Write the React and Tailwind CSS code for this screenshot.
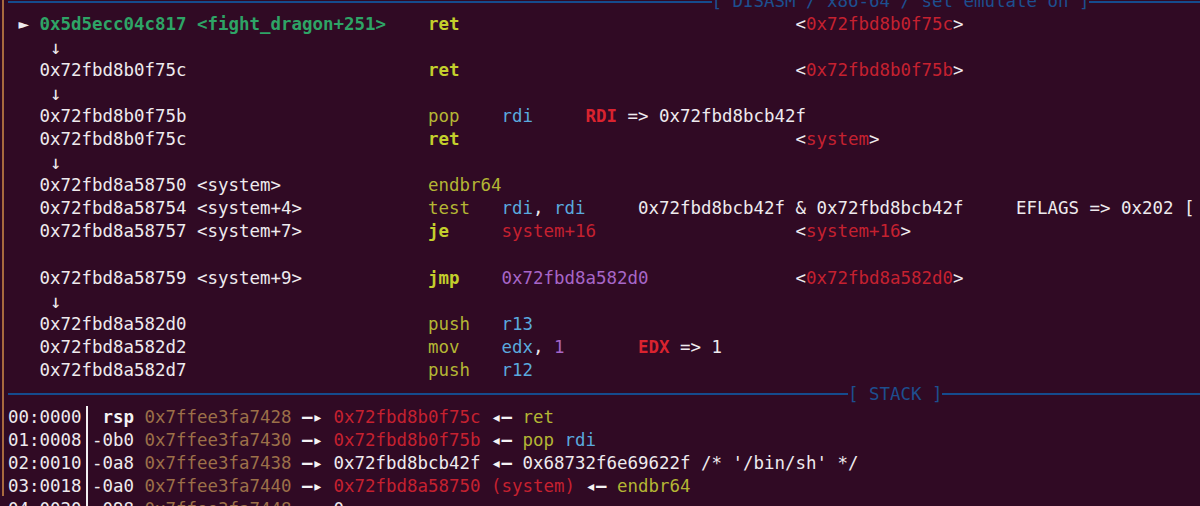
import React from 'react';

// pwndbg context: disasm + stack panes in an Ubuntu terminal
const W = 'text-[#eeeaee]';
const WB = 'text-[#f4f2f4] font-bold';
const G = 'text-[#2ea466] font-bold';
const Y = 'text-[#b4b634]';
const YB = 'text-[#c3cf2c] font-bold';
const R = 'text-[#c52130]';
const RB = 'text-[#d9232f] font-bold';
const B = 'text-[#5aa9de]';
const P = 'text-[#a766c8]';
const BR = 'text-[#9c7049]';
const DOWN = 'text-[#eeeaee] text-[19px]';

const disasm = [
  [[1, '►', W], [3, '0x5d5ecc04c817 <fight_dragon+251>', G], [40, 'ret', YB], [75, '<', W], [76, '0x72fbd8b0f75c', R], [90, '>', W]],
  [[4, '↓', DOWN]],
  [[3, '0x72fbd8b0f75c', W], [40, 'ret', YB], [75, '<', W], [76, '0x72fbd8b0f75b', R], [90, '>', W]],
  [[4, '↓', DOWN]],
  [[3, '0x72fbd8b0f75b', W], [40, 'pop', Y], [47, 'rdi', B], [55, 'RDI', RB], [59, '=> 0x72fbd8bcb42f', W]],
  [[3, '0x72fbd8b0f75c', W], [40, 'ret', YB], [75, '<', W], [76, 'system', R], [82, '>', W]],
  [[4, '↓', DOWN]],
  [[3, '0x72fbd8a58750 <system>', W], [40, 'endbr64', Y]],
  [[3, '0x72fbd8a58754 <system+4>', W], [40, 'test', Y], [47, 'rdi', B], [50, ', ', W], [52, 'rdi', B], [60, '0x72fbd8bcb42f & 0x72fbd8bcb42f', W], [96, 'EFLAGS => 0x202 [', W]],
  [[3, '0x72fbd8a58757 <system+7>', W], [40, 'je', YB], [47, 'system+16', R], [75, '<', W], [76, 'system+16', R], [85, '>', W]],
  [],
  [[3, '0x72fbd8a58759 <system+9>', W], [40, 'jmp', YB], [47, '0x72fbd8a582d0', P], [75, '<', W], [76, '0x72fbd8a582d0', R], [90, '>', W]],
  [[4, '↓', DOWN]],
  [[3, '0x72fbd8a582d0', W], [40, 'push', Y], [47, 'r13', B]],
  [[3, '0x72fbd8a582d2', W], [40, 'mov', Y], [47, 'edx', B], [50, ', ', W], [52, '1', P], [60, 'EDX', RB], [64, '=> 1', W]],
  [[3, '0x72fbd8a582d7', W], [40, 'push', Y], [47, 'r12', B]],
];

const stack = [
  ['00:0000', [[9, 'rsp', WB], [13, '0x7ffee3fa7428', BR], [28, '—▸', WB], [31, '0x72fbd8b0f75c', R], [46, '◂—', WB], [49, 'ret', Y]]],
  ['01:0008', [[8, '-0b0', W], [13, '0x7ffee3fa7430', BR], [28, '—▸', WB], [31, '0x72fbd8b0f75b', R], [46, '◂—', WB], [49, 'pop', Y], [53, 'rdi', B]]],
  ['02:0010', [[8, '-0a8', W], [13, '0x7ffee3fa7438', BR], [28, '—▸', WB], [31, '0x72fbd8bcb42f', W], [46, '◂—', WB], [49, "0x68732f6e69622f /* '/bin/sh' */", W]]],
  ['03:0018', [[8, '-0a0', W], [13, '0x7ffee3fa7440', BR], [28, '—▸', WB], [31, '0x72fbd8a58750 (system)', R], [55, '◂—', WB], [58, 'endbr64', Y]]],
  ['04:0020', [[8, '-098', W], [13, '0x7ffee3fa7448', BR], [28, '◂—', WB], [31, '0', W]]],
];

function Cells({ segs, start = 0 }) {
  let cur = start;
  const out = [];
  segs.forEach(([col, text, cls], i) => {
    if (col > cur) out.push(' '.repeat(col - cur));
    out.push(<span key={i} className={cls}>{text}</span>);
    cur = col + [...text].length;
  });
  return <span className="whitespace-pre">{out}</span>;
}

function Divider({ left, label }) {
  return (
    <div className="flex items-center h-[23.05px]">
      <div className="h-[2px] bg-[#154b8e] shrink-0" style={{ width: left }} />
      <span className="whitespace-pre text-[#1d4f8f]">{label}</span>
      <div className="h-[2px] bg-[#154b8e] flex-1" />
    </div>
  );
}

export default function App() {
  return (
    <div className="w-[1200px] h-[506px] overflow-hidden bg-[#300a24] pl-[2px]">
      <div className="h-full border-l-2 border-[#a86a3e] pl-[4px] font-['DejaVu_Sans_Mono',monospace] text-[17.44px] leading-[23.05px] text-[#eeeaee]">
        <div className="-mt-[10px] flex flex-col">
          <Divider left="703.5px" label="[ DISASM / x86-64 / set emulate on ]" />
          {disasm.map((segs, i) => (
            <div key={i} className="h-[23.05px] overflow-visible">
              <Cells segs={segs} />
            </div>
          ))}
          <div className="h-[1px]" />
          <Divider left="840px" label="[ STACK ]" />
          {stack.map(([idx, segs], i) => (
            <div key={i} className="flex h-[23.05px]">
              <span className="whitespace-pre">{idx}</span>
              <span className="w-[10.5px] flex justify-center">
                <span className="w-[2px] bg-[#f2f0f2]" />
              </span>
              <Cells segs={segs} start={8} />
            </div>
          ))}
        </div>
      </div>
    </div>
  );
}
